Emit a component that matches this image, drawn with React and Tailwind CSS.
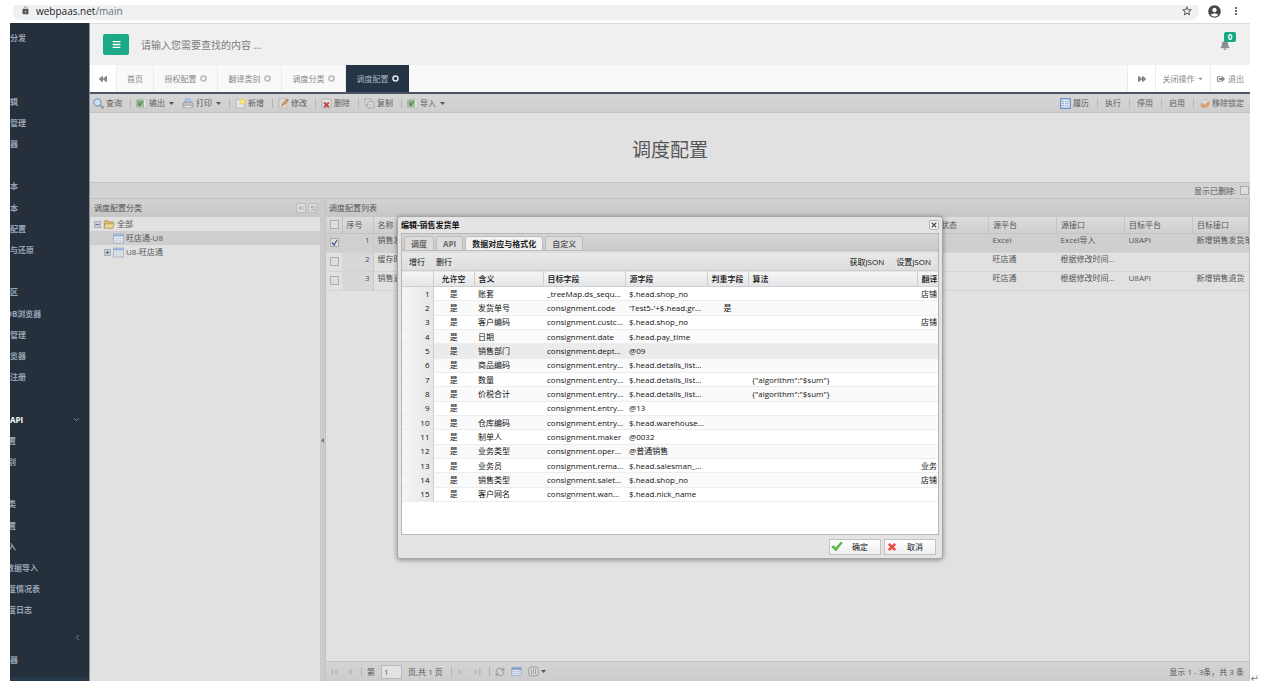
import React from "react";
import { MdLock, MdStarBorder, MdAccountCircle, MdMoreVert } from "react-icons/md";
import { FaBars, FaBell, FaBackward, FaForward, FaSignOutAlt, FaCaretDown } from "react-icons/fa";
import { ChevronDown, ChevronLeft, ChevronsLeft, RefreshCw, ArrowLeftRight } from "lucide-react";

/* ---------- icons ---------- */

const SearchIcon = () => (
  <svg className="size-[11px]" viewBox="0 0 16 16" aria-hidden="true">
    <path d="M10.5 10.5 14.5 14" stroke="#a09a94" strokeWidth="3" strokeLinecap="round" />
    <circle cx="6.5" cy="6.5" r="5.2" fill="#cfe0ee" stroke="#7fa0c4" strokeWidth="2" />
  </svg>
);
const ExcelIcon = () => (
  <svg className="size-[11px]" viewBox="0 0 16 16" aria-hidden="true">
    <path d="M5 1.5h8l2 2v11H5z" fill="#e4e6e4" stroke="#b4b8b4" />
    <rect x="1" y="3" width="10" height="10" fill="#9fc09c" stroke="#8aae88" />
    <path d="m3.500 8 2 2.500 4-5.500M3.500 5.500l2 1.500" fill="none" stroke="#4f7f50" strokeWidth="1.800" />
  </svg>
);
const PrinterIcon = () => (
  <svg className="h-[11px] w-3" viewBox="0 0 18 16" aria-hidden="true">
    <path d="M5 1h7l2 6H4z" fill="#a9c8ee" stroke="#8fa9c6" />
    <path d="M1.5 7.5 3.500 6h11l2 1.500v5h-15z" fill="#bfc1c6" stroke="#8f8f94" />
    <path d="M3.500 11h11l1 3.500h-13z" fill="#ececec" stroke="#9a9a9a" />
  </svg>
);
const NewIcon = () => (
  <svg className="size-[11px]" viewBox="0 0 16 16" aria-hidden="true">
    <path d="M1.500 2.500h9l3 3v9h-12z" fill="#e6e6e6" stroke="#aaa" />
    <circle cx="11" cy="5" r="4.300" fill="#ead766" />
    <circle cx="11" cy="5" r="1.800" fill="#f7f0bd" />
  </svg>
);
const EditIcon = () => (
  <svg className="size-[11px]" viewBox="0 0 16 16" aria-hidden="true">
    <path d="M1.500 1.500h11v13h-11z" fill="#e4e4e4" stroke="#a8a8a8" />
    <path d="M3.500 5h6M3.500 8h3" stroke="#bbb" />
    <path d="m5 12 1-3 6-6.500 2.500 2L8 11z" fill="#dc9a62" stroke="#b97a48" />
    <path d="m12 2.500 2.500 2 1-1.500-2-2z" fill="#c96a5c" />
  </svg>
);
const DeleteIcon = () => (
  <svg className="size-[11px]" viewBox="0 0 16 16" aria-hidden="true">
    <path d="M1.500 1.500h13v13h-13z" fill="#e2e2e2" stroke="#a5a5a5" />
    <path d="m4.500 6.500 7 7m0-7-7 7" stroke="#c44444" strokeWidth="2.800" />
  </svg>
);
const CopyIcon = () => (
  <svg className="size-[11px]" viewBox="0 0 16 16" aria-hidden="true">
    <path d="M1.500 1.500h9v9h-9z" fill="#dcdcdc" stroke="#9c9c9c" />
    <path d="M5.500 5.500h9v9h-9z" fill="#e2e2e2" stroke="#929292" />
    <path d="M7.500 9h5M7.500 11.500h5" stroke="#aaa" />
  </svg>
);
const HistoryIcon = () => (
  <svg className="size-[11px]" viewBox="0 0 16 16" aria-hidden="true">
    <rect x="1" y="1" width="14" height="14" fill="#dfe6f0" stroke="#6d8fc8" strokeWidth="1.800" />
    <path d="M3.500 5h2M3.500 8h2M3.500 11h2" stroke="#6d8fc8" strokeWidth="1.400" />
    <path d="M7.500 5h5M7.500 8h5M7.500 11h5" stroke="#a5b4c8" strokeWidth="1.400" />
  </svg>
);
const UnlockIcon = () => (
  <svg className="size-[11px]" viewBox="0 0 16 16" aria-hidden="true">
    <path d="M3 9a5.500 5.500 0 1 1 11-2" fill="#dedede" stroke="#bcbcbc" strokeWidth="1.300" />
    <path d="m2 11 4-4v2.500c3 1 5 0 5.500-3H15c0 6-3.500 8-9 7V15z" fill="#e2a06c" stroke="#cc8a58" strokeWidth=".6" />
  </svg>
);
const FolderIcon = () => (
  <svg className="h-[11px] w-3" viewBox="0 0 18 16" aria-hidden="true">
    <path d="M2 13V3.500L3 2h4l1.500 2H15v9z" fill="#d8bb6e" stroke="#a98d4a" />
    <path d="M1.500 13.500 3.500 7h13l-1.500 6.500z" fill="#eed99a" stroke="#a98d4a" />
  </svg>
);
const GridIcon = () => (
  <svg className="size-[11px]" viewBox="0 0 16 16" aria-hidden="true">
    <rect x=".5" y="1.500" width="15" height="13" fill="#e8ecf0" stroke="#8fa0b6" />
    <rect x="1" y="2" width="14" height="3" fill="#8fb0dc" />
    <path d="M5.500 6v8M10.500 6v8M2 8h12M2 11h12" stroke="#c0cad6" />
  </svg>
);
const ToggleBox = ({ plus }) => (
  <svg className="size-[7px]" viewBox="0 0 9 9" aria-hidden="true">
    <rect x=".5" y=".5" width="8" height="8" fill="#c8cfda" stroke="#a0a7b4" />
    <path d={plus ? "M2 4.500h5M4.500 2v5" : "M2 4.500h5"} stroke="#4d5a70" />
  </svg>
);
const CheckIcon = () => (
  <svg className="h-[11px] w-3" viewBox="0 0 16 14" aria-hidden="true">
    <path d="m1 7.500 2.500-1.500L6 9 13.500 1l1.500 1L6.500 13z" fill="#5fc53c" stroke="#38922a" strokeWidth=".8" />
  </svg>
);
const CrossIcon = () => (
  <svg className="size-[10px]" viewBox="0 0 14 14" aria-hidden="true">
    <path d="m2.500 2.500 9 9m0-9-9 9" stroke="#ee4a48" strokeWidth="3.600" />
  </svg>
);
const Ring = () => (
  <svg className="size-[7px]" viewBox="0 0 14 14" aria-hidden="true">
    <circle cx="7" cy="7" r="5" fill="none" stroke="currentColor" strokeWidth="3" />
  </svg>
);
const PageArrow = ({ last, flip }) => (
  <svg className={flip ? "size-2 rotate-180" : "size-2"} viewBox="0 0 10 10" aria-hidden="true">
    {last && <path d="M1.500 1v8" stroke="#b0b0b0" strokeWidth="1.500" />}
    <path d="M8.500 1v8L3.500 5z" fill="#bcbcbc" />
  </svg>
);

/* ---------- shared pieces ---------- */

const Sep = () => <span className="mr-[5px] ml-2 h-[9px] w-px bg-[#b4b4b4]" />;
const Caret = () => (
  <svg className="ml-0.5 h-[3px] w-[5px]" viewBox="0 0 5 3" aria-hidden="true"><path d="M0 0h5L2.500 3z" fill="#555" /></svg>
);

const ToolButton = ({ icon, label, menu }) => (
  <button type="button" className="flex items-center gap-0.5 whitespace-nowrap">
    {icon}
    <span>{label}</span>
    {menu && <Caret />}
  </button>
);

const Box = ({ id, label, checked }) => (
  <span className="grid size-[9px]">
    <input
      id={id}
      type="checkbox"
      aria-label={label}
      defaultChecked={checked}
      className="peer col-start-1 row-start-1 size-[9px] appearance-none border border-[#adadad] bg-[#dedede]"
    />
    <svg className="pointer-events-none invisible col-start-1 row-start-1 size-[9px] peer-checked:visible" viewBox="0 0 9 9" aria-hidden="true">
      <path d="m2 4.500 2 2.500 3-5" fill="none" stroke="#4a5a98" strokeWidth="1.300" />
    </svg>
  </span>
);

/* ---------- sidebar ---------- */

const menu = [
  "辑", "管理", "器", "", "本", "本", "配置", "与还原", "", "区", "DB浏览器", "管理", "览器", "注册", "",
  "API", "置", "别", "", "类", "置", "入", "数据导入", "度情况表", "度日志",
];

const Sidebar = () => (
  <nav aria-label="主菜单" className="flex w-[80px] shrink-0 flex-col overflow-hidden border-r border-[#8d9298] bg-[#25303c] text-[8px] leading-3 font-bold text-[#98a3b4]">
    <a href="#dispatch" className="block pt-[9px] whitespace-nowrap">分发</a>
    <ul className="mt-[47px] grid h-[530px] auto-rows-fr">
      {menu.map((m, i) => (
        <li key={i} className="flex items-center justify-between">
          {m && (
            <a
              href={"#menu-" + i}
              className={
                m === "API"
                  ? "text-white"
                  : m === "DB浏览器" || m === "数据导入"
                  ? "-ml-1 whitespace-nowrap"
                  : i > 15
                  ? "-ml-0.5 whitespace-nowrap"
                  : "whitespace-nowrap"
              }
            >
              {m}
            </a>
          )}
          {m === "API" && <ChevronDown className="mr-2 size-[9px]" aria-hidden="true" />}
        </li>
      ))}
    </ul>
    <div className="mt-3 flex justify-end pr-[7px]"><ChevronLeft className="size-[9px]" aria-hidden="true" /></div>
    <a href="#tool" className="mt-3 block">器</a>
    <div className="mt-auto h-1 bg-[#273a4c]" />
  </nav>
);

/* ---------- header and tabs ---------- */

const Header = () => (
  <header className="flex h-[42px] items-center border-t border-[#dcdcdc] bg-[#f0f0f0] pr-3 pl-[13px]">
    <button type="button" aria-label="切换菜单" className="flex h-[21px] w-[26px] items-center justify-center rounded-[2px] bg-[#1ba987] text-white">
      <FaBars className="size-[9px]" />
    </button>
    <input
      type="search"
      aria-label="查找"
      placeholder="请输入您需要查找的内容 ..."
      className="ml-3 w-[200px] bg-transparent text-[10px] leading-4 text-[#444] outline-none placeholder:text-[#7b7b7b]"
    />
    <button type="button" aria-label="通知" className="relative ml-auto mr-2 text-[#8b9096]">
      <FaBell className="size-[10px]" />
      <span className="absolute -top-2 left-1 flex h-[10px] w-3 items-center justify-center rounded-[2px] bg-[#12aa84] text-[8px] leading-none font-bold text-white">0</span>
    </button>
  </header>
);

const TabBar = () => (
  <div className="flex h-[29px] border-b-2 border-[#4b5565] bg-[#f9f9f9] text-[8px] text-[#888]">
    <button type="button" aria-label="向左" className="flex w-[26px] items-center justify-center bg-white"><FaBackward className="size-2" /></button>
    <button type="button" className="w-[38px] border-x border-[#ececec]">首页</button>
    {["授权配置", "翻译类别", "调度分类"].map((t) => (
      <button key={t} type="button" className="flex w-16 items-center justify-center gap-[3px] border-r border-[#ececec]">
        {t}<span className="text-[#b8b8b8]"><Ring /></span>
      </button>
    ))}
    <button type="button" aria-current="page" className="flex w-[63px] items-center justify-center gap-[3px] bg-[#263546] text-[#a7b1c2]">
      调度配置<span className="text-[#e4e8ee]"><Ring /></span>
    </button>
    <div className="ml-auto flex bg-white">
      <button type="button" aria-label="向右" className="flex w-7 items-center justify-center border-l border-[#ececec]"><FaForward className="size-2" /></button>
      <button type="button" className="flex w-[55px] items-center justify-center gap-0.5 border-l border-[#ececec]">关闭操作<FaCaretDown className="size-[7px]" /></button>
      <a href="#logout" className="flex w-10 items-center justify-center gap-[3px] border-l border-[#ececec]"><FaSignOutAlt className="size-2" />退出</a>
    </div>
  </div>
);

const Toolbar = () => (
  <div className="flex h-[19px] items-center border-b border-[#c4c4c4] bg-linear-to-b from-[#d6d6d6] to-[#cecece] pr-1.5 pl-[3px] text-[8px] text-[#606060]">
    <ToolButton icon={<SearchIcon />} label="查询" />
    <Sep />
    <ToolButton icon={<ExcelIcon />} label="输出" menu />
    <span className="w-2" />
    <ToolButton icon={<PrinterIcon />} label="打印" menu />
    <Sep />
    <ToolButton icon={<NewIcon />} label="新增" />
    <Sep />
    <ToolButton icon={<EditIcon />} label="修改" />
    <Sep />
    <ToolButton icon={<DeleteIcon />} label="删除" />
    <Sep />
    <ToolButton icon={<CopyIcon />} label="复制" />
    <Sep />
    <ToolButton icon={<ExcelIcon />} label="导入" menu />
    <div className="ml-auto flex items-center">
      <ToolButton icon={<HistoryIcon />} label="履历" />
      {["执行", "停用", "启用"].map((t) => (
        <React.Fragment key={t}>
          <Sep />
          <button type="button" className="pl-0.5">{t}</button>
        </React.Fragment>
      ))}
      <Sep />
      <ToolButton icon={<UnlockIcon />} label="移除锁定" />
    </div>
  </div>
);

/* ---------- panels behind the dialog ---------- */

const TreePanel = () => (
  <section className="flex w-[230px] shrink-0 flex-col bg-[#e1e1e1]">
    <div className="flex h-[18px] items-center gap-0.5 bg-linear-to-b from-[#d2d2d2] to-[#c6c6c6] pr-0.5 pl-1">
      <h2 className="mr-auto text-[#555]">调度配置分类</h2>
      <button type="button" aria-label="折叠" className="flex size-[10px] items-center justify-center rounded-[2px] border border-[#bbb] bg-[#dcdcdc] text-[#888]"><ChevronsLeft className="size-2" /></button>
      <button type="button" aria-label="刷新" className="flex size-[10px] items-center justify-center rounded-[2px] border border-[#bbb] bg-[#dcdcdc] text-[#888]"><ArrowLeftRight className="size-[7px]" /></button>
    </div>
    <ul className="leading-[14px]">
      <li>
        <button type="button" className="flex h-[14px] w-full items-center gap-0.5 pl-1"><ToggleBox /><FolderIcon />全部</button>
        <ul>
          <li><button type="button" className="flex h-[14px] w-full items-center gap-0.5 bg-[#cfcfcf] pl-[23px]"><GridIcon />旺店通-U8</button></li>
          <li><button type="button" className="flex h-[14px] w-full items-center gap-0.5 pl-[14px]"><ToggleBox plus /><GridIcon />U8-旺店通</button></li>
        </ul>
      </li>
    </ul>
  </section>
);

const listRows = [
  [1, "销售发货单", "Excel", "Excel导入", "U8API", "新增销售发货单"],
  [2, "缓存时间", "旺店通", "根据修改时间…", "", ""],
  [3, "销售退货单", "旺店通", "根据修改时间…", "U8API", "新增销售退货"],
];

const ListPanel = () => (
  <section className="flex min-w-0 flex-1 flex-col border-x border-[#c2c2c2] bg-[#e1e1e1]">
    <h2 className="h-[18px] bg-linear-to-b from-[#d2d2d2] to-[#c6c6c6] pl-[3px] leading-[17px] text-[#555]">调度配置列表</h2>
    <table className="w-full table-fixed border-collapse text-left">
      <colgroup>
        <col className="w-4" /><col className="w-[31px]" /><col /><col className="w-[68px]" /><col className="w-[68px]" />
        <col className="w-[68px]" /><col className="w-[68px]" /><col className="w-[56px]" />
      </colgroup>
      <thead>
        <tr className="h-4 bg-linear-to-b from-[#dcdcdc] to-[#cfcfcf] [&>th]:border-r [&>th]:border-b [&>th]:border-[#c4c4c4] [&>th]:p-0 [&>th]:pl-1 [&>th]:font-normal [&>th]:whitespace-nowrap">
          <th><Box label="全选" /></th>
          <th>序号</th>
          <th>名称</th>
          <th><span className="pl-4">状态</span></th>
          <th>源平台</th>
          <th>源接口</th>
          <th>目标平台</th>
          <th>目标接口</th>
        </tr>
      </thead>
      <tbody>
        {listRows.map((r, i) => (
          <tr key={r[0]} className={"h-[19px] border-b border-[#d3d3d3] align-top leading-3 [&>td]:overflow-hidden [&>td]:p-0 [&>td]:pl-1 [&>td]:whitespace-nowrap " + (i === 0 ? "bg-[#cfcfcf]" : "bg-[#e1e1e1]")}>
            <td><div className="pt-1"><Box label={"选择第" + r[0] + "行"} checked={i === 0} /></div></td>
            <td className="border-r border-[#c9c9c9] bg-[#d2d2d2]/60 text-right"><span className="pr-[3px]">{r[0]}</span></td>
            <td>{r[1]}</td>
            <td />
            <td>{r[2]}</td>
            <td>{r[3]}</td>
            <td>{r[4]}</td>
            <td>{r[5]}</td>
          </tr>
        ))}
      </tbody>
    </table>
    <footer className="mt-auto flex h-5 items-center border-t border-[#c4c4c4] bg-linear-to-b from-[#d4d4d4] to-[#cdcdcd] pr-[5px] pl-[5px]">
      <button type="button" aria-label="首页"><PageArrow last /></button>
      <button type="button" aria-label="上一页" className="ml-1.5"><PageArrow /></button>
      <Sep />
      <label htmlFor="page">第</label>
      <input id="page" defaultValue="1" className="ml-1.5 h-[14px] w-[21px] border border-[#b4bac4] bg-[#e2e2e2] pl-0.5" />
      <span className="ml-1.5 whitespace-nowrap">页,共 1 页</span>
      <Sep />
      <button type="button" aria-label="下一页"><PageArrow flip /></button>
      <button type="button" aria-label="末页" className="ml-2"><PageArrow last flip /></button>
      <Sep />
      <button type="button" aria-label="刷新"><RefreshCw className="size-[10px] text-[#888]" /></button>
      <button type="button" aria-label="表格设置" className="ml-1.5">
        <svg className="size-[11px]" viewBox="0 0 16 16"><rect x="1" y="2" width="14" height="12" rx="1" fill="#dbe4ef" stroke="#7f9dc6" /><path d="M1 4h14" stroke="#7f9dc6" strokeWidth="3" /><path d="M3 8h3M3 11h3M8 8h5M8 11h5" stroke="#9aa9bc" /></svg>
      </button>
      <button type="button" aria-label="每页条数" className="ml-1.5 flex items-center">
        <svg className="size-[11px]" viewBox="0 0 16 16"><rect x="1" y="1.500" width="14" height="13" rx="4" fill="#d8d8d8" stroke="#858585" /><path d="M5 4v8M8 4v8M11 4v8" stroke="#8a8a8a" /></svg>
        <Caret />
      </button>
      <span className="ml-auto whitespace-nowrap">显示 1 - 3条，共 3 条</span>
    </footer>
  </section>
);

/* ---------- dialog ---------- */

const fields = [
  ["账套", "_treeMap.ds_sequ…", "$.head.shop_no", "", "", "店铺"],
  ["发货单号", "consignment.code", "'Test5-'+$.head.gr…", "是", "", ""],
  ["客户编码", "consignment.custc…", "$.head.shop_no", "", "", "店铺"],
  ["日期", "consignment.date", "$.head.pay_time", "", "", ""],
  ["销售部门", "consignment.dept…", "@09", "", "", ""],
  ["商品编码", "consignment.entry…", "$.head.details_list…", "", "", ""],
  ["数量", "consignment.entry…", "$.head.details_list…", "", '{"algorithm":"$sum"}', ""],
  ["价税合计", "consignment.entry…", "$.head.details_list…", "", '{"algorithm":"$sum"}', ""],
  ["", "consignment.entry…", "@13", "", "", ""],
  ["仓库编码", "consignment.entry…", "$.head.warehouse…", "", "", ""],
  ["制单人", "consignment.maker", "@0032", "", "", ""],
  ["业务类型", "consignment.oper…", "@普通销售", "", "", ""],
  ["业务员", "consignment.rema…", "$.head.salesman_…", "", "", "业务"],
  ["销售类型", "consignment.salet…", "$.head.shop_no", "", "", "店铺"],
  ["客户网名", "consignment.wan…", "$.head.nick_name", "", "", ""],
];

const DialogTab = ({ label, active }) => (
  <button
    type="button"
    role="tab"
    aria-selected={!!active}
    className={
      "h-[14px] rounded-t-[3px] border border-b-0 border-[#bcbcbc] px-[6px] font-bold whitespace-nowrap " +
      (active ? "bg-[#f2f2f2] text-[#222]" : "bg-[#dcdcdc] text-[#666]")
    }
  >
    {label}
  </button>
);

const Dialog = () => (
  <div role="dialog" aria-labelledby="dialog-title" className="w-[546px] rounded-[3px] border border-[#a6a6a6] bg-[#e4e4e4] px-[3px] text-[8px] text-[#111] shadow-[0_1px_5px_rgba(0,0,0,0.4)]">
    <div className="flex h-4 items-center justify-between">
      <h2 id="dialog-title" className="font-bold">编辑-销售发货单</h2>
      <button type="button" aria-label="关闭" className="flex size-[10px] items-center justify-center rounded-[2px] border border-[#b5b5b5] bg-[#f4f4f4]">
        <svg className="size-[6px]" viewBox="0 0 8 8"><path d="m1 1 6 6m0-6-6 6" stroke="#555" strokeWidth="1.800" /></svg>
      </button>
    </div>
    <div className="border border-[#bdb4b4] bg-white">
      <div role="tablist" className="flex h-[17px] items-end gap-0.5 border-b border-[#bcbcbc] bg-linear-to-b from-[#d6d6d6] to-[#cacaca] pl-0.5">
        <DialogTab label="调度" />
        <DialogTab label="API" />
        <DialogTab label="数据对应与格式化" active />
        <DialogTab label="自定义" />
      </div>
      <div className="flex h-[19px] items-center border-t-2 border-[#dedede] bg-linear-to-b from-[#e8e8e8] to-[#dedede] px-[7px]">
        <button type="button">增行</button>
        <button type="button" className="ml-[11px]">删行</button>
        <button type="button" className="ml-auto">获取JSON</button>
        <button type="button" className="ml-3">设置JSON</button>
      </div>
      <div className="h-[264px] overflow-hidden">
        <table className="h-[232px] w-full table-fixed border-collapse text-left">
          <colgroup>
            <col className="w-[31px]" /><col className="w-[41px]" /><col className="w-[69px]" /><col className="w-[82px]" />
            <col className="w-[82px]" /><col className="w-[41px]" /><col /><col className="w-[21px]" />
          </colgroup>
          <thead>
            <tr className="h-4 border-y border-[#cfcfcf] bg-linear-to-b from-[#f6f6f6] to-[#e3e5e8] [&>th]:overflow-hidden [&>th]:border-r [&>th]:border-[#cfcfcf] [&>th]:p-0 [&>th]:pl-1 [&>th]:leading-3 [&>th]:font-medium [&>th]:whitespace-nowrap [&>th:last-child]:border-r-0">
              <th aria-label="行号" />
              <th><div className="pr-1 text-center">允许空</div></th>
              <th>含义</th>
              <th>目标字段</th>
              <th>源字段</th>
              <th>判重字段</th>
              <th>算法</th>
              <th>翻译</th>
            </tr>
          </thead>
          <tbody>
            {fields.map((f, i) => (
              <tr
                key={i}
                className={
                  "border-b border-[#ededed] leading-3 [&>td]:overflow-hidden [&>td]:p-0 [&>td]:pl-1 [&>td]:whitespace-nowrap " +
                  (i === 4 ? "bg-[#ebebeb]" : i % 2 ? "bg-[#fafafa]" : "bg-white")
                }
              >
                <td className="border-r border-[#d0d0d0] bg-linear-to-r from-[#f5f5f5] to-[#e6e6e6] text-right"><span className="pr-[3px]">{i + 1}</span></td>
                <td><div className="pr-1 text-center">是</div></td>
                <td>{f[0]}</td>
                <td>{f[1]}</td>
                <td>{f[2]}</td>
                <td><div className="pr-1 text-center">{f[3]}</div></td>
                <td>{f[4]}</td>
                <td>{f[5]}</td>
              </tr>
            ))}
          </tbody>
        </table>
      </div>
    </div>
    <div className="flex h-[23px] items-center justify-end gap-[3px] pr-[3px]">
      <button type="button" className="flex h-4 w-[52px] items-center gap-[9px] border border-[#c2c2c2] bg-linear-to-b from-white to-[#eeeeee] pl-px"><CheckIcon />确定</button>
      <button type="button" className="flex h-4 w-[52px] items-center gap-2.5 border border-[#c2c2c2] bg-linear-to-b from-white to-[#eeeeee] pl-0.5"><CrossIcon />取消</button>
    </div>
  </div>
);

/* ---------- page ---------- */

export default function App() {
  return (
    <div className="relative flex min-h-screen flex-col bg-white pt-[5px] pr-[15px] pb-1.5 pl-[10px] font-['Open_Sans','Noto_Sans_CJK_SC',sans-serif] [&_button]:cursor-pointer">
      <div className="flex h-[18px] items-start">
        <div className="ml-[3px] flex h-[15px] flex-1 items-start rounded-b-[8px] bg-[#eff1f3] pr-1.5 pl-2 text-[10px] leading-3 text-[#6a6e73]">
          <MdLock className="mt-px size-[9px] text-[#555]" />
          <span className="ml-1.5"><span className="text-[#222]">webpaas.net</span>/main</span>
          <button type="button" aria-label="收藏" className="ml-auto"><MdStarBorder className="size-3 text-[#444]" /></button>
        </div>
        <div className="flex h-3 items-center gap-2 px-2">
          <button type="button" aria-label="帐户"><MdAccountCircle className="size-[15px] text-[#44484d]" /></button>
          <button type="button" aria-label="更多"><MdMoreVert className="size-3 text-[#44484d]" /></button>
        </div>
      </div>
      <div className="flex flex-1">
        <Sidebar />
        <div className="flex min-w-0 flex-1 flex-col">
          <Header />
          <TabBar />
          <main className="relative flex flex-1 flex-col text-[8px] text-[#555]">
            <Toolbar />
            <h1 className="flex h-[69px] items-center justify-center bg-[#e1e1e1] pt-1.5 text-[19px] text-[#555]">调度配置</h1>
            <div className="flex h-[17px] items-center justify-end gap-1 border-y border-[#c2c2c2] bg-[#d3d3d3] pr-px">
              <label htmlFor="deleted">显示已删除:</label>
              <Box id="deleted" />
            </div>
            <div className="flex flex-1 bg-[#c9c9c9]">
              <TreePanel />
              <div className="flex w-[5px] shrink-0 items-center justify-center bg-[#cbcbcb]">
                <svg className="h-[5px] w-[3px]" viewBox="0 0 3 5" aria-hidden="true"><path d="M3 0v5L0 2.500z" fill="#777" /></svg>
              </div>
              <ListPanel />
            </div>
            <div className="absolute inset-0 flex items-center justify-center">
              <Dialog />
            </div>
          </main>
        </div>
      </div>
      <span className="absolute right-1.5 bottom-0.5 font-['DejaVu_Sans',sans-serif] text-[10px] leading-3 text-[#777]">↵</span>
    </div>
  );
}
